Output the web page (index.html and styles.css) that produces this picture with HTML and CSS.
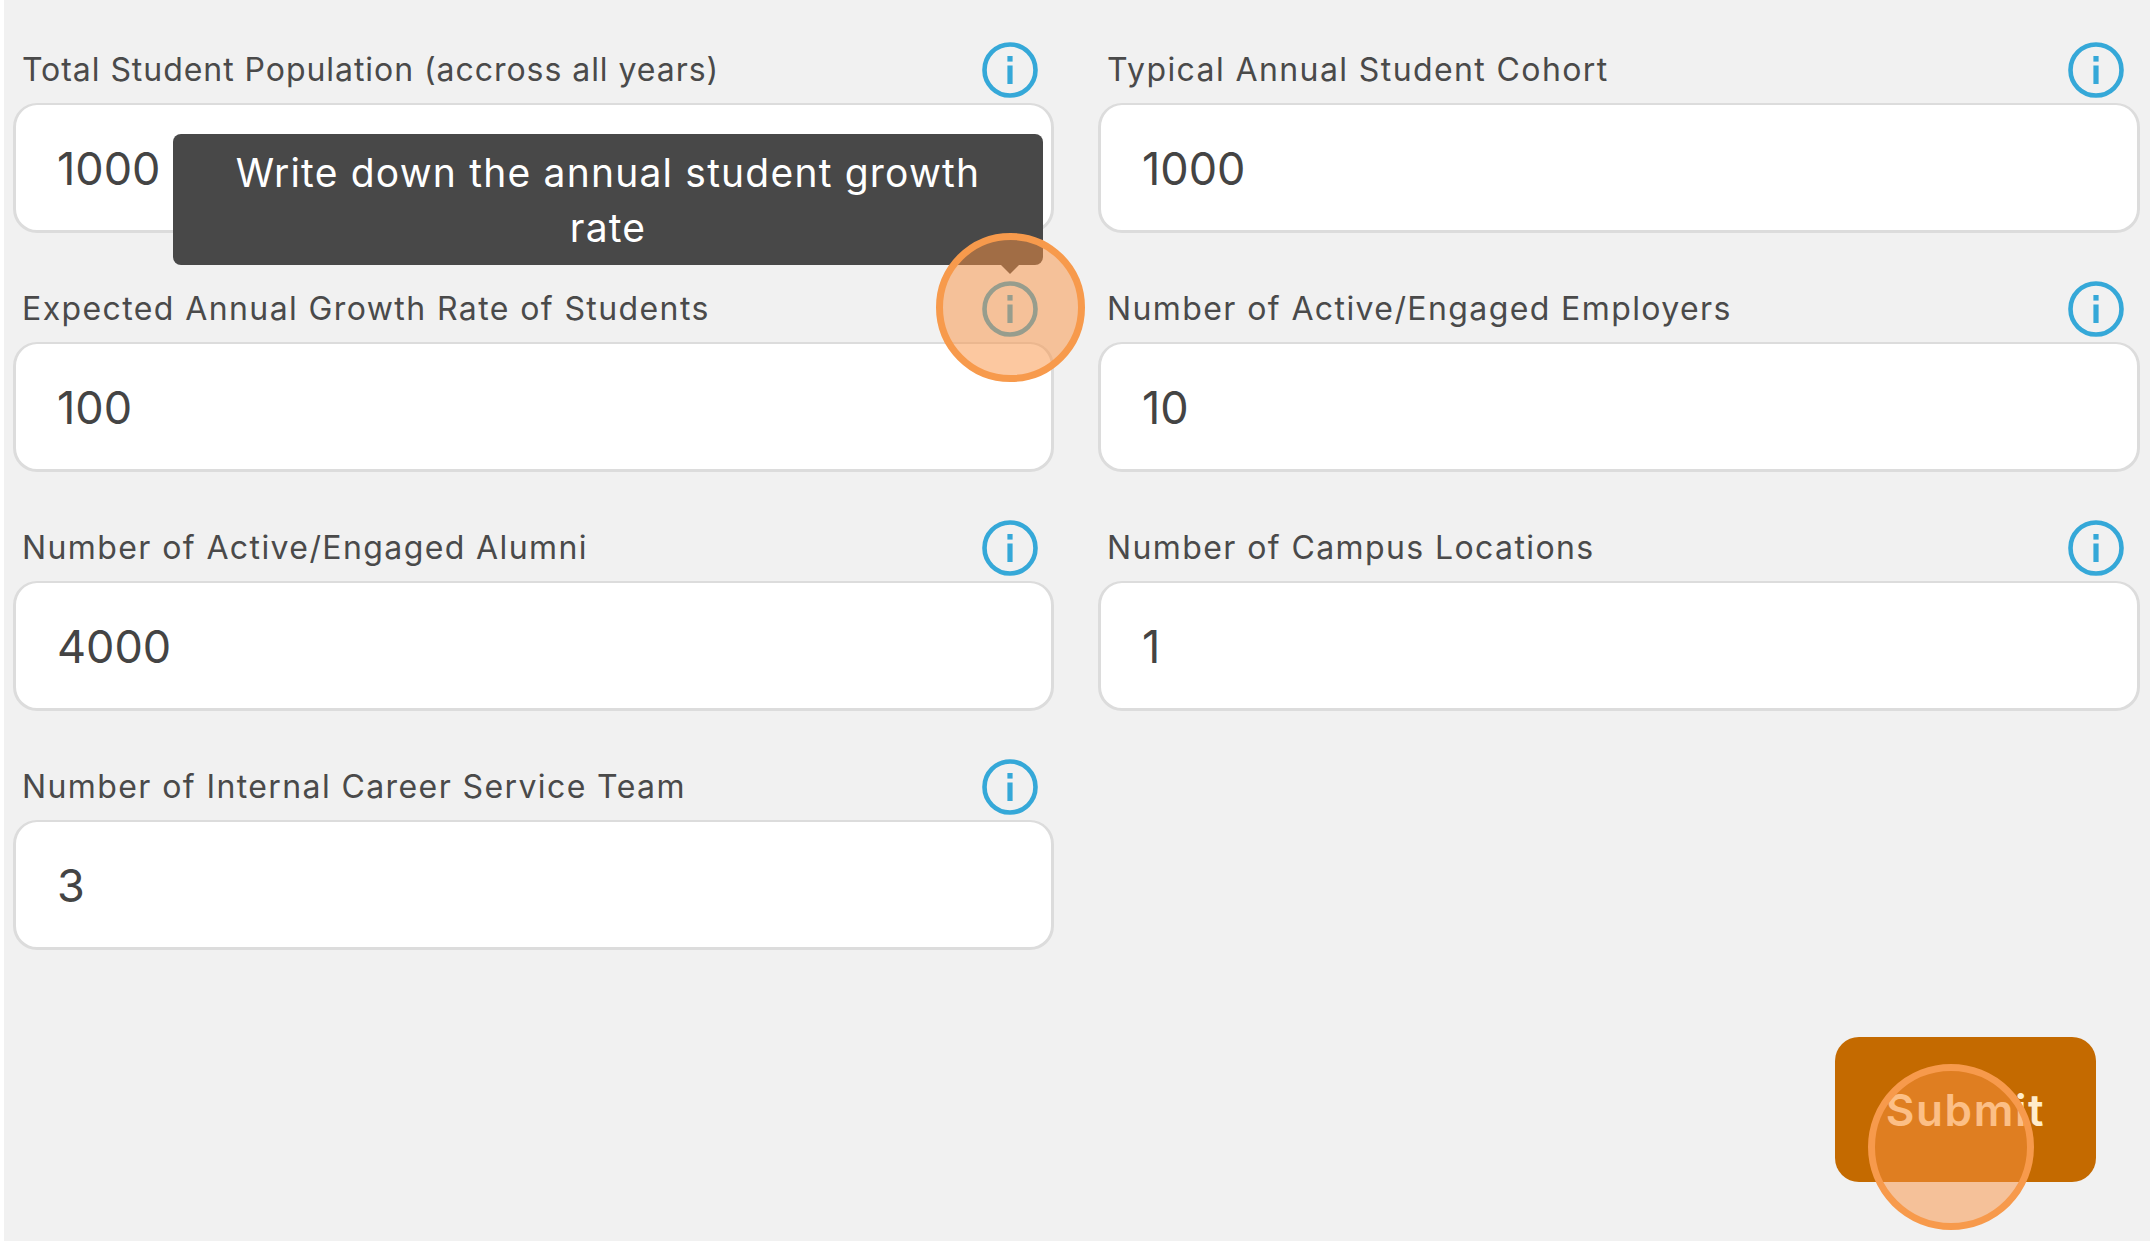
FILE: index.html
```html
<!DOCTYPE html>
<html lang="en">
<head>
<meta charset="utf-8">
<title>Institution details</title>
<link rel="stylesheet" href="styles.css">
</head>
<body>
<svg class="defs" width="0" height="0" aria-hidden="true">
  <symbol id="info" viewBox="0 0 56 56">
    <circle cx="28" cy="28" r="25.5" fill="none" stroke="currentColor" stroke-width="4.6"/>
    <rect x="25.4" y="14" width="5.2" height="5.6" fill="currentColor"/>
    <rect x="25.4" y="23.5" width="5.2" height="18.5" fill="currentColor"/>
  </symbol>
</svg>
<main class="panel">
  <form class="grid">
    <div class="field">
      <div class="label-row"><label class="label label-narrow">Total Student Population (accross all years)</label><svg class="info"><use href="#info"/></svg></div>
      <input class="input" value="1000">
    </div>
    <div class="field">
      <div class="label-row"><label class="label">Typical Annual Student Cohort</label><svg class="info"><use href="#info"/></svg></div>
      <input class="input" value="1000">
    </div>
    <div class="field">
      <div class="label-row"><label class="label">Expected Annual Growth Rate of Students</label><svg class="info"><use href="#info"/></svg></div>
      <input class="input" value="100">
    </div>
    <div class="field">
      <div class="label-row"><label class="label">Number of Active/Engaged Employers</label><svg class="info"><use href="#info"/></svg></div>
      <input class="input" value="10">
    </div>
    <div class="field">
      <div class="label-row"><label class="label">Number of Active/Engaged Alumni</label><svg class="info"><use href="#info"/></svg></div>
      <input class="input" value="4000">
    </div>
    <div class="field">
      <div class="label-row"><label class="label">Number of Campus Locations</label><svg class="info"><use href="#info"/></svg></div>
      <input class="input" value="1">
    </div>
    <div class="field">
      <div class="label-row"><label class="label">Number of Internal Career Service Team</label><svg class="info"><use href="#info"/></svg></div>
      <input class="input" value="3">
    </div>
  </form>
  <div class="actions"><button class="submit" type="button">Submit</button></div>
  <div class="tooltip">Write down the annual student growth rate</div>
  <div class="spot spot-info"></div>
  <div class="spot spot-submit"></div>
</main>
</body>
</html>
```
FILE: styles.css
```css
* { box-sizing: border-box; }
html, body { margin: 0; background: #fff; }
body { height: 1246px; overflow: hidden; font-family: "Inter", "Liberation Sans", sans-serif; }
.defs { position: absolute; }
.panel {
  position: relative;
  width: 2146px;
  height: 1241px;
  margin-left: 4px;
  padding: 34px 10px 0 9px;
  background: #f1f1f1;
}
.grid {
  display: grid;
  grid-template-columns: 1041px 1042px;
  column-gap: 44px;
  row-gap: 40px;
}
.label-row {
  display: flex;
  align-items: center;
  justify-content: space-between;
  height: 69px;
  padding: 0 16px 0 9px;
}
.label { margin-top: 2px; font-size: 32px; color: #4a4a4a; letter-spacing: 1.4px; }
.label-narrow { letter-spacing: 0.95px; }
.info { width: 56px; height: 56px; margin-top: 2px; color: #35a8d8; flex: none; }
.input {
  display: block;
  width: 100%;
  height: 130px;
  padding: 2px 41px 0;
  border: 3px solid #dcdcdc;
  border-top-width: 2px;
  border-radius: 24px;
  background: #fff;
  font: 400 45px "Inter", "Liberation Sans", sans-serif;
  color: #444;
}
.actions {
  position: absolute;
  top: 1037px;
  right: 54px;
}
.submit {
  display: flex;
  align-items: center;
  justify-content: center;
  width: 261px;
  height: 145px;
  border: 0;
  border-radius: 24px;
  background: #c46a00;
  color: #ffeccb;
  font: 600 44px "Inter", "Liberation Sans", sans-serif;
  letter-spacing: 1.6px;
}
.tooltip {
  position: absolute;
  left: 169px;
  top: 134px;
  width: 870px;
  height: 131px;
  padding: 11px 30px 0;
  border-radius: 8px;
  background: #484848;
  color: #fff;
  font-size: 39px;
  letter-spacing: 1.2px;
  line-height: 55px;
  text-align: center;
}
.tooltip::after {
  content: "";
  position: absolute;
  left: 828px;
  bottom: -9px;
  border: 9px solid transparent;
  border-bottom: 0;
  border-top-color: #484848;
}
.spot {
  position: absolute;
  border: 7px solid #f79a4c;
  border-radius: 50%;
  background: rgba(250, 145, 65, 0.5);
}
.spot-info { left: 932px; top: 233px; width: 149px; height: 149px; }
.spot-submit { left: 1864px; top: 1064px; width: 166px; height: 166px; }
```
